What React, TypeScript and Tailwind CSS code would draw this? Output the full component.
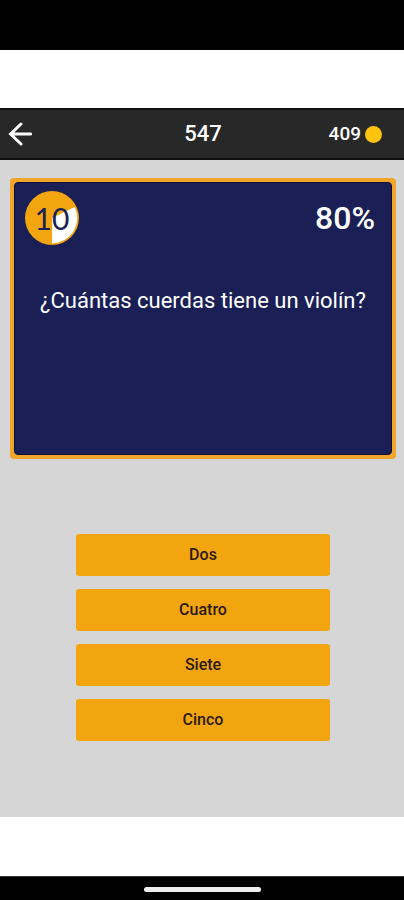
const answers = ['Dos', 'Cuatro', 'Siete', 'Cinco'];

function Timer({ seconds }: { seconds: number }) {
  return (
    <div
      role="timer"
      className="grid size-[54px] place-items-center font-['Lato',sans-serif] text-[30px] leading-none text-[#1a1f56]"
    >
      <svg viewBox="0 0 54 54" className="col-start-1 row-start-1 size-full" aria-hidden="true">
        <circle cx="27" cy="27" r="27" fill="#f3a50f" />
        <path d="M27 27 L49.7 16 A25.2 25.2 0 0 1 27 52.2 Z" fill="#fff" />
      </svg>
      <span className="z-10 col-start-1 row-start-1">{seconds}</span>
    </div>
  );
}

export default function App() {
  return (
    <div className="flex min-h-screen flex-col bg-white font-['Roboto',sans-serif]">
      <div className="h-[50px] bg-black" />

      <header className="mt-[58px] grid h-[52px] grid-cols-3 items-center border-y-2 border-[#111111] bg-[#282828] pr-[22px] pl-2 font-medium text-white">
        <button type="button" aria-label="Volver" className="size-6">
          <svg
            viewBox="0 0 24 24"
            className="size-6"
            fill="none"
            stroke="#fff"
            strokeWidth="3"
            strokeLinecap="round"
            aria-hidden="true"
          >
            <path d="M22.6 12H3M13 2 2.6 12 13 22" />
          </svg>
        </button>
        <h1 className="pl-4 text-center text-[22px] leading-6">547</h1>
        <p className="flex items-center justify-end gap-1 text-[19px] leading-6">
          409
          <span className="size-[17px] rounded-full bg-[#ffc20e]" />
        </p>
      </header>

      <main className="flex grow flex-col bg-[#d6d6d6] pt-[18px] pr-2 pl-2.5">
        <section className="min-h-[281px] rounded-[4px] bg-[#f0a62a] p-1">
          <div className="min-h-[273px] rounded-[4px] border border-[#0e0f38] bg-[#1a1f56] px-2.5 py-2 text-white">
            <div className="flex items-center justify-between pr-1.5">
              <Timer seconds={10} />
              <p className="text-[32px] leading-10 font-medium">80%</p>
            </div>
            <h2 className="mt-10 text-center text-[22px] leading-8">¿Cuántas cuerdas tiene un violín?</h2>
          </div>
        </section>

        <div className="mt-[75px] flex flex-col gap-[13px] px-[66px] pb-[76px]">
          {answers.map((answer) => (
            <button
              key={answer}
              type="button"
              className="h-[42px] rounded-[3px] bg-[#f3a50f] text-base font-medium text-[#2a1a12]"
            >
              {answer}
            </button>
          ))}
        </div>
      </main>

      <div className="mt-[59px] flex h-[25px] items-center justify-center border-t border-[#333333] bg-black">
        <div className="h-[5px] w-[117px] rounded-full bg-[#eeeeee]" />
      </div>
    </div>
  );
}
